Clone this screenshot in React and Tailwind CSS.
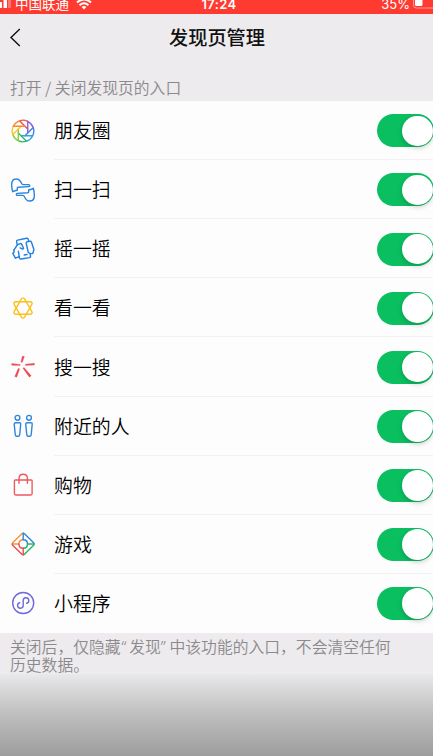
import { useState } from "react";

const APERTURE_COLORS = [
  "#f0524f",
  "#8b62d9",
  "#4a7fe8",
  "#2fa5dc",
  "#2fb96a",
  "#8fcb3a",
  "#f5c62c",
  "#f58a33",
];

function point(radius, deg) {
  const rad = (deg * Math.PI) / 180;
  return `${(12 + radius * Math.cos(rad)).toFixed(2)} ${(12 + radius * Math.sin(rad)).toFixed(2)}`;
}

function Icon({ color, children }) {
  return (
    <svg
      className="size-6 shrink-0"
      viewBox="0 0 24 24"
      fill="none"
      stroke={color}
      strokeWidth="1.4"
      strokeLinecap="round"
      strokeLinejoin="round"
    >
      {children}
    </svg>
  );
}

// each blade is an arc of the rim plus one extended edge of the inner octagon
function MomentsIcon() {
  return (
    <Icon>
      {APERTURE_COLORS.map((color, i) => {
        const normal = -45 + i * 45;
        const start = normal - 64.2;
        return (
          <path
            key={color}
            stroke={color}
            d={`M${point(10.8, start + 45)}A10.8 10.8 0 0 0 ${point(10.8, start)}L${point(5.1, normal + 22.5)}`}
          />
        );
      })}
    </Icon>
  );
}

const HAND =
  "M1.7 13.7C.9 11.2.6 8.3.7 5.9.8 2.800 2.800 1 5.300 1 8.400.9 9.600 3.200 10.500 5.300Q11 6.600 12.300 6.600H17.600A1 1 0 0 1 17.700 8.600L7.400 9.300Q6.100 9.500 6.300 10.800V12.200Q4.300 12.300 1.700 13.700";

function ScanIcon() {
  return (
    <Icon color="#2b83dc">
      <path d={HAND} />
      <path d={HAND} transform="rotate(180 12 12)" />
    </Icon>
  );
}

function ShakeIcon() {
  return (
    <Icon color="#1f7fe0">
      <path d="M6.300 7.800 5.600 4.600Q5.400 3.400 6.600 3.100L15.600 1.200Q16.900 1 17.200 2.200L17.600 4.200" />
      <path d="M2.900 13.200 6.300 7.800 9.300 6.600Q10.300 6.400 10.700 7.400L12.600 11.200Q12.400 12.400 11 11.800L9.200 10.800" />
      <path d="M2.900 13.200 3.200 15 1.700 16.200 4.400 21.200 8.300 19.600" />
      <path d="M7.400 14.200 8.400 20.800Q8.700 22.200 10.100 22L18.500 20.600Q19.800 20.300 19.500 19L19.200 17.300" />
      <path d="M15.200 6.200Q15 5.200 15.900 4.900L19 4.200Q20.100 4 20.400 5L22.900 12.500 21.900 16.300Q19.500 17.300 17.300 15.500Z" />
      <path d="M13.200 18 16 17.500" />
    </Icon>
  );
}

const ROUNDED_TRIANGLE =
  "M10.3 3.200Q12 .5 13.700 3.200L20.600 15.100Q22.200 18.100 18.900 18.200H5.100Q1.800 18.100 3.400 15.100Z";

function TopStoriesIcon() {
  return (
    <Icon color="#fbc01c">
      <path d={ROUNDED_TRIANGLE} />
      <path d={ROUNDED_TRIANGLE} transform="rotate(180 12 12)" />
    </Icon>
  );
}

function SearchIcon() {
  return (
    <svg className="size-6 shrink-0" viewBox="0 0 24 24" fill="#e94b55" stroke="#e94b55" strokeWidth=".3">
      <path d="M11.400 .9 13.400 1.400 11.300 7.400 9.900 7.100Z" />
      <path d="M.7 8.400 9.300 9.400 9.200 10.600.7 10.300Z" />
      <path d="M14.400 9.200 23.400 8.200 23.500 10 14.400 10.400Z" />
      <path d="M7.300 13.300 8.700 13.900 5.700 22.200 3.700 21.400Z" />
      <path d="M11.900 13.300 13.100 12.500 20.200 20.700 18.400 22.200Z" />
    </svg>
  );
}

function NearbyIcon() {
  return (
    <Icon color="#2f86de">
      <circle cx="6.500" cy="3.800" r="2.400" />
      <circle cx="18" cy="3.800" r="2.400" />
      <path d="M3.200 10.100Q3.200 8.700 4.600 8.700H8.400Q9.800 8.700 9.700 10.100L8.700 20.800Q8.600 22.200 7.500 22.200H5.600Q4.500 22.200 4.300 20.800Z" />
      <path d="M14.700 10.100Q14.700 8.700 16.100 8.700H19.900Q21.300 8.700 21.200 10.100L20.200 20.800Q20.100 22.200 19 22.200H17.100Q16 22.200 15.800 20.800Z" />
    </Icon>
  );
}

function ShoppingIcon() {
  return (
    <Icon color="#ec5a60">
      <path d="M4.200 7H20.300Q21.100 7 21.100 7.800V20.400Q21.100 22 19.500 22H5Q3.400 22 3.400 20.400V7.800Q3.400 7 4.200 7Z" />
      <path d="M8 10.300V5.700Q8 1.300 12.200 1.300T16.400 5.700V10.300" />
    </Icon>
  );
}

function GamesIcon() {
  return (
    <Icon>
      <g stroke="#f0953c">
        <path d="M1.300 12Q1 11.200 1.900 10.400L10.600 1.900Q11.300 1.200 12.200 1.200" />
        <path d="M1.600 12H7.900Q7.900 7.700 12.200 7.700" />
      </g>
      <g stroke="#3184d9">
        <path d="M12.200 1.200Q13 1.200 13.700 1.900L22.400 10.400Q23.200 11.200 23 12" />
        <path d="M12.200 1.500V7.700Q16.500 7.700 16.500 12" />
      </g>
      <g stroke="#26b565">
        <path d="M23 12Q23.200 12.800 22.400 13.600L13.700 22.100Q13 22.800 12.200 22.800" />
        <path d="M22.800 12H16.500Q16.500 16.300 12.200 16.300" />
      </g>
      <g stroke="#e84b50">
        <path d="M12.200 22.800Q11.300 22.800 10.600 22.100L1.900 13.600Q1 12.800 1.300 12" />
        <path d="M12.200 22.500V16.300Q7.900 16.300 7.900 12" />
      </g>
    </Icon>
  );
}

function MiniProgramsIcon() {
  return (
    <Icon color="#7068d8">
      <circle cx="12.200" cy="12" r="10.500" />
      <path d="M8.700 11.700A2.800 2.800 0 1 0 12.200 14.500V9.500A2.800 2.800 0 1 1 15.700 12.300" />
    </Icon>
  );
}

const ENTRIES = [
  { label: "朋友圈", icon: MomentsIcon },
  { label: "扫一扫", icon: ScanIcon },
  { label: "摇一摇", icon: ShakeIcon },
  { label: "看一看", icon: TopStoriesIcon },
  { label: "搜一搜", icon: SearchIcon },
  { label: "附近的人", icon: NearbyIcon },
  { label: "购物", icon: ShoppingIcon },
  { label: "游戏", icon: GamesIcon },
  { label: "小程序", icon: MiniProgramsIcon },
];

function Toggle({ on, onChange }) {
  return (
    <button
      role="switch"
      aria-checked={on}
      onClick={onChange}
      className={`flex h-[33px] w-[57px] shrink-0 items-center rounded-full px-[1.5px] ${
        on ? "justify-end bg-[#0abf60]" : "justify-start bg-gray-200"
      }`}
    >
      <span className="size-[30.5px] rounded-full bg-white shadow-[0_2px_5px_rgba(0,0,0,0.2)]" />
    </button>
  );
}

function StatusBar() {
  return (
    <div className="grid h-[14px] grid-cols-[1fr_auto_1fr] items-start overflow-hidden bg-[#ff3a30] text-white">
      <div className="-mt-[7px] flex h-[21px] items-center">
        <svg className="h-[9px] w-[15px]" viewBox="0 0 15 9" fill="#fff">
          <rect x="-1" y="3" width="3" height="6" rx=".5" />
          <rect x="3.500" y="0" width="3.500" height="9" rx=".5" />
          <rect x="8" y="0" width="3" height="9" rx=".5" opacity=".3" />
        </svg>
        <span className="text-[13.500px] leading-[21px]">中国联通</span>
        <svg className="ml-[7px] h-[12px] w-[16px]" viewBox="0 0 16 12" fill="none" stroke="#fff" strokeWidth="2">
          <path d="M1 4.500Q8-1.500 15 4.500M3.500 7.200Q8 3.300 12.500 7.200" />
          <path d="M5.600 9Q8 7.200 10.400 9L8 11.500Z" fill="#fff" stroke="none" />
        </svg>
      </div>
      <span className="-mt-[6.500px] pl-[5px] font-[Inter,sans-serif] text-[13px] font-semibold leading-[21px] tracking-[0.400px]">
        17:24
      </span>
      <div className="-mt-[6.500px] flex h-[21px] items-center justify-end">
        <span className="font-[Inter,sans-serif] text-[13px] leading-[21px]">35%</span>
        <svg className="ml-[3px] h-[12px] w-[20px]" viewBox="0 0 20 12" fill="none">
          <rect x=".5" y="-1.500" width="26" height="11.500" rx="3" stroke="#fff" opacity=".5" />
          <rect x="2" y="0" width="7.500" height="8" rx="1.500" fill="#fff" />
        </svg>
      </div>
    </div>
  );
}

export default function App() {
  const [enabled, setEnabled] = useState(ENTRIES.map(() => true));

  const toggle = (index) =>
    setEnabled(enabled.map((on, i) => (i === index ? !on : on)));

  return (
    <div
      lang="zh-CN"
      className="flex h-[756px] w-[433px] flex-col overflow-hidden bg-[#edebed] font-['Noto_Sans_CJK_SC',sans-serif]"
    >
      <StatusBar />

      {/* Nav bar */}
      <header className="grid h-[48px] grid-cols-[1fr_auto_1fr] items-center">
        <svg className="ml-[9px] size-5" viewBox="0 0 20 20" fill="none" stroke="#111" strokeWidth="1.400">
          <path d="M10.800 1 2 9.500 10.800 18" />
        </svg>
        <h1 className="pb-[2px] pl-px text-[19.200px] font-medium leading-6 text-[#111]">发现页管理</h1>
      </header>

      <p className="flex h-[39px] items-end px-[10px] pb-[2px] text-[15.800px] font-[350] leading-[23px] text-[#8b898b]">
        打开 / 关闭发现页的入口
      </p>

      {/* Entries */}
      <ul className="flex h-[532px] flex-col bg-[#fefdfe] pl-[10.500px]">
        {ENTRIES.map(({ label, icon: EntryIcon }, i) => (
          <li key={label} className="flex flex-1 items-center">
            <EntryIcon />
            <div
              className={`ml-[19.500px] flex h-full flex-1 items-center justify-between border-b pt-[1.500px] ${
                i < ENTRIES.length - 1 ? "border-[#f2f0f3]" : "border-transparent"
              }`}
            >
              <span className="pb-px text-[18.900px] font-[350] text-black">{label}</span>
              <div className="-mr-px">
                <Toggle on={enabled[i]} onChange={() => toggle(i)} />
              </div>
            </div>
          </li>
        ))}
      </ul>

      <p className="h-[41px] px-[10px] pt-[5px] text-[15.800px] font-[350] leading-[18px] text-[#8b898b]">
        关闭后，仅隐藏
        <span className="pl-px font-['Noto_Sans'] tracking-[2.700px]">“</span>
        发现
        <span className="font-['Noto_Sans'] tracking-[3.700px]">”</span>
        中该功能的入口，不会清空任何
        <br />
        历史数据。
      </p>
      <div className="flex-1 bg-linear-to-b from-[#e9e8ea] via-[#bebebe] to-[#9d9d9d]" />
    </div>
  );
}
